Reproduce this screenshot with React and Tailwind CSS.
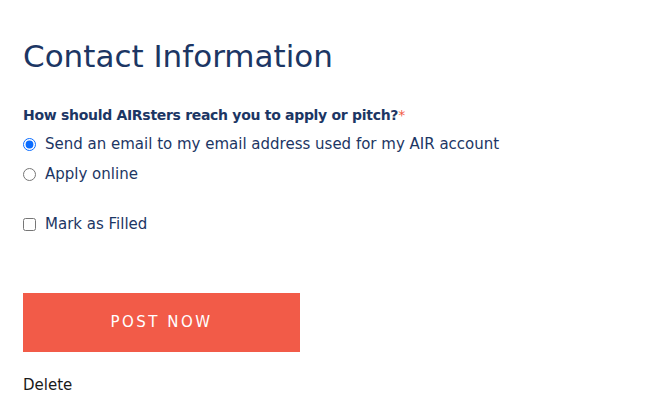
import React from 'react';

const navy = 'text-[#1c3664]';

export default function App() {
  return (
    <div className="w-[650px] h-[414px] bg-white px-[23px] pt-[36px] font-['DejaVu_Sans',sans-serif]">
      <h1 className={`text-[31px] leading-[40px] ${navy} font-normal`}>Contact Information</h1>

      <div className="mt-[29px]">
        <p className={`text-[14px] leading-[20px] font-bold tracking-[-0.3px] ${navy}`}>
          How should AIRsters reach you to apply or pitch?<span className="text-[#f25b48] font-normal">*</span>
        </p>
        <label className={`mt-[8px] flex items-center gap-[9px] text-[15px] leading-[22px] ${navy}`}>
          <input type="radio" name="reach" defaultChecked className="w-[13px] h-[13px] m-0 accent-[#0a6cff]" />
          Send an email to my email address used for my AIR account
        </label>
        <label className={`mt-[8px] flex items-center gap-[9px] text-[15px] leading-[22px] ${navy}`}>
          <input type="radio" name="reach" className="w-[13px] h-[13px] m-0" />
          Apply online
        </label>
        <label className={`mt-[28px] flex items-center gap-[9px] text-[15px] leading-[22px] ${navy}`}>
          <input type="checkbox" className="w-[13px] h-[13px] m-0" />
          Mark as Filled
        </label>
      </div>

      <button className="mt-[58px] w-[277px] h-[59px] bg-[#f25b48] text-white text-[15px] tracking-[2.5px] font-medium">
        POST NOW
      </button>

      <p className="mt-[23px] text-[15px] leading-[20px] text-[#1a1a1a]">Delete</p>
    </div>
  );
}
